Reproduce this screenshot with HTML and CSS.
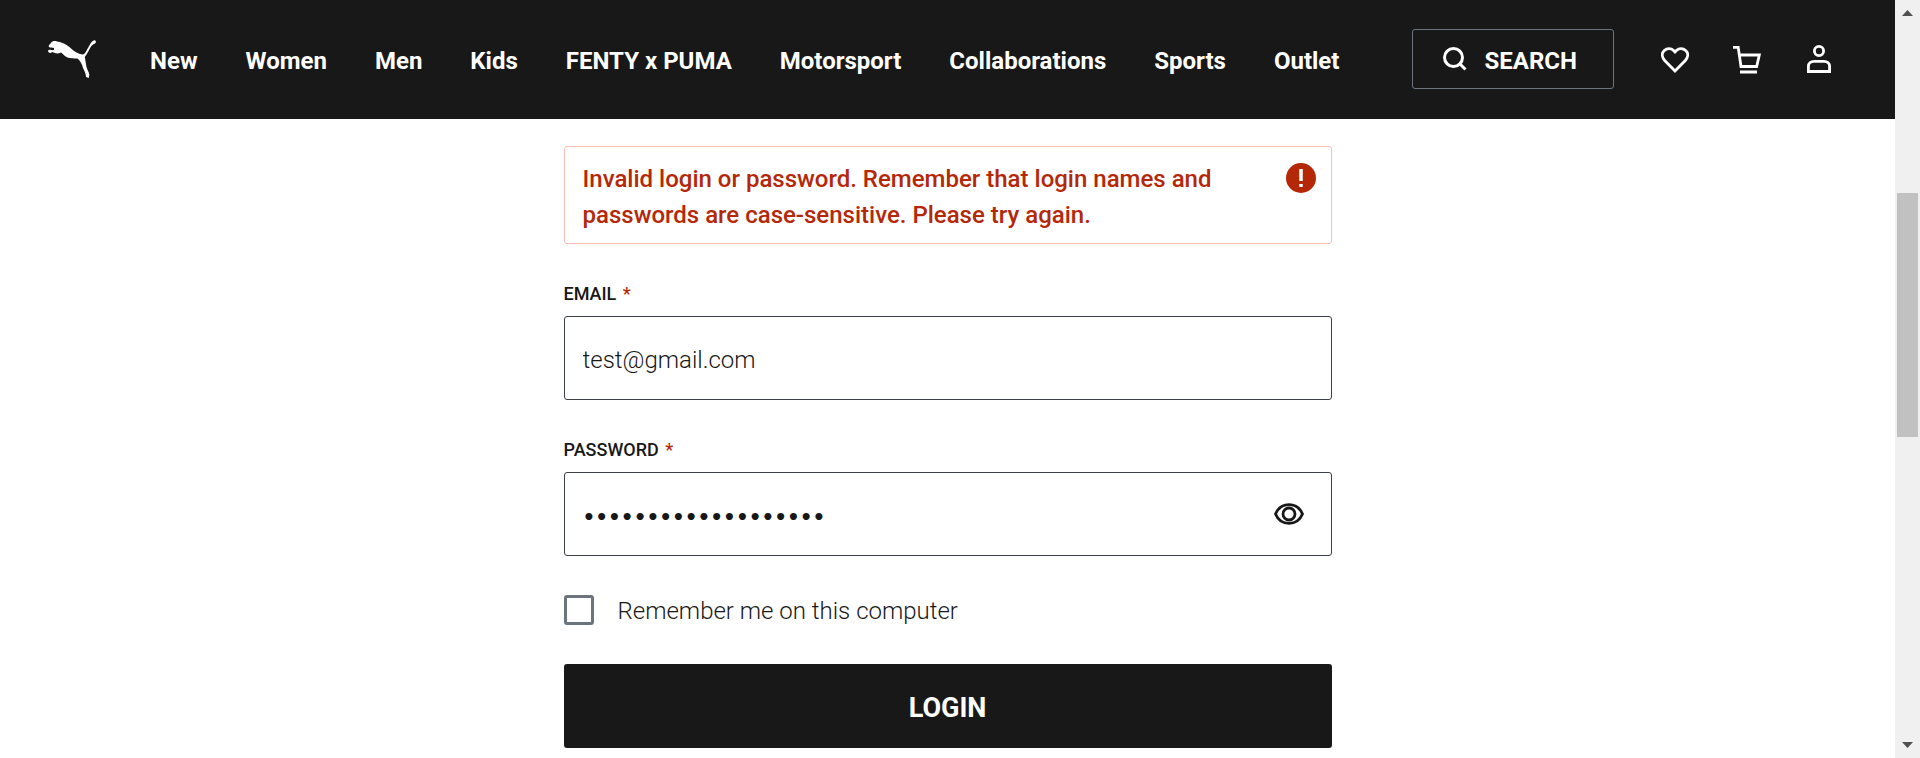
FILE: index.html
```html
<!DOCTYPE html>
<html lang="en">
<head>
<meta charset="utf-8">
<title>Login | PUMA</title>
<link rel="stylesheet" href="styles.css">
</head>
<body>
<div class="page">
  <header class="header">
    <a class="logo" href="#" aria-label="PUMA home">
      <svg width="48" height="38" viewBox="0 0 48 38" fill="currentColor"><path d="M1 7 C0 5 2 4.500 3 3 C4 1 7 .5 9 1.500 C14 2 18 4.500 22 7.500 C26 11.500 30 14 34.500 14.500 C37.500 14 38 11 40 8 C42 4.500 43 1.500 46 .2 C48 -.3 48.600 2.500 47 3.500 C44 4.500 42.800 6.500 41.300 9.500 C39.800 12.500 38 15 36.800 17 C37.500 21 38 24 38.500 27 C39 30 41.300 32 41.300 35 L40.800 38 L38 37 C38 34 36.500 31 35 28 C34 24 32 20.500 29.500 18.500 C26 18.500 22 18.200 19.500 17.500 C17 16.500 15 14 13 12.500 C10 14 7 13.500 4.500 12 L2.500 13 C0 12.500 -.3 11.500 .5 10 C2.500 9.500 4.500 10.500 6 10 L6 8 C4.500 7.500 2.500 8 1 7Z"/></svg>
    </a>
    <nav class="nav">
      <a href="#">New</a>
      <a href="#">Women</a>
      <a href="#">Men</a>
      <a href="#">Kids</a>
      <a href="#">FENTY x PUMA</a>
      <a href="#">Motorsport</a>
      <a href="#">Collaborations</a>
      <a href="#">Sports</a>
      <a href="#">Outlet</a>
    </nav>
    <div class="tools">
      <button class="search" type="button">
        <svg width="24" height="24" viewBox="0 0 24 24" fill="none" stroke="currentColor" stroke-width="3"><circle cx="10.500" cy="10.500" r="9"/><path d="M16.500 16.500L22.500 22.500"/></svg>
        <span>SEARCH</span>
      </button>
      <a class="tool" href="#" aria-label="Wishlist">
        <svg width="28" height="30" viewBox="0 0 28 30" fill="none" stroke="currentColor" stroke-width="2.800"><path d="M14 27 L3.700 16.500 C.6 13 .6 9 3.300 6.500 C6 4 10 4 12.300 6.300 L14 8 L15.700 6.300 C18 4 22 4 24.700 6.500 C27.400 9 27.400 13 24.300 16.500Z"/></svg>
      </a>
      <a class="tool" href="#" aria-label="Cart">
        <svg width="28" height="30" viewBox="0 0 28 30" fill="none" stroke="currentColor" stroke-width="2.800"><path d="M0 3.400H5.200L8 22.500H23.700L26.300 11H6.500M7 28H24"/></svg>
      </a>
      <a class="tool" href="#" aria-label="My account">
        <svg width="28" height="30" viewBox="0 0 28 30" fill="none" stroke="currentColor" stroke-width="2.800"><circle cx="14" cy="7" r="4.600"/><path d="M3.400 27.500V22.500C3.400 19 6 17.400 9 17.400H19C22 17.400 24.600 19 24.600 22.500V27.500Z"/></svg>
      </a>
    </div>
  </header>
  <main class="main">
    <form class="form">
      <div class="alert" role="alert">
        <p class="alert-text">Invalid login or password. Remember that login names and passwords are case-sensitive. Please try again.</p>
        <svg class="alert-icon" width="30" height="30" viewBox="0 0 30 30"><circle cx="15" cy="15" r="15" fill="#b52807"/><path d="M15 6V18M15 21V24" stroke="#fff" stroke-width="3.500"/></svg>
      </div>
      <div class="field">
        <label class="label" for="email">EMAIL <span class="required">*</span></label>
        <div class="box"><input class="input" id="email" type="email" value="test@gmail.com"></div>
      </div>
      <div class="field">
        <label class="label" for="password">PASSWORD <span class="required">*</span></label>
        <div class="box">
          <input class="input input-password" id="password" type="password" value="correcthorsebattery">
          <button class="reveal" type="button" aria-label="Show password">
            <svg width="30" height="22" viewBox="0 0 30 22" fill="none" stroke="currentColor" stroke-width="2.800"><path d="M1.500 11C4 5 9 1.700 15 1.700S26 5 28.500 11C26 17 21 20.300 15 20.300S4 17 1.500 11Z"/><circle cx="15" cy="11" r="6"/></svg>
          </button>
        </div>
      </div>
      <div class="remember">
        <input class="check" id="remember" type="checkbox">
        <label class="remember-label" for="remember">Remember me on this computer</label>
      </div>
      <button class="login" type="submit">LOGIN</button>
    </form>
  </main>
</div>
<div class="scrollbar" aria-hidden="true">
  <svg width="11" height="6" viewBox="0 0 11 6"><path d="M0 6L5.500 0L11 6Z" fill="#505050"/></svg>
  <div class="track"><div class="thumb"></div></div>
  <svg width="11" height="6" viewBox="0 0 11 6"><path d="M0 0L5.500 6L11 0Z" fill="#505050"/></svg>
</div>
</body>
</html>
```
FILE: styles.css
```css
* { box-sizing: border-box; }

body {
  display: flex;
  height: 100vh;
  margin: 0;
  overflow: hidden;
  background: #fff;
  color: #181818;
  font-family: Roboto, "Liberation Sans", sans-serif;
}

.page {
  flex: 1;
  min-width: 0;
  overflow: hidden;
}

.header {
  display: flex;
  align-items: center;
  padding: 29px 62px 30px 48px;
  background: #181818;
  color: #fff;
}

.header a { color: inherit; text-decoration: none; }

.logo, .tool { display: flex; }

.nav {
  display: flex;
  gap: 48px;
  margin-left: 54px;
  padding-top: 3px;
  font-size: 24px;
  font-weight: 700;
  line-height: 32px;
  white-space: nowrap;
}

.tools {
  display: flex;
  align-items: center;
  gap: 44px;
  margin-left: auto;
}

.search {
  display: flex;
  align-items: center;
  gap: 18px;
  height: 60px;
  margin-right: 3px;
  padding: 0 36px 0 30px;
  border: 1px solid #6c757d;
  border-radius: 3px;
  background: transparent;
  color: inherit;
  font: 700 24px/32px Roboto, "Liberation Sans", sans-serif;
}

.search span { padding-top: 3px; }

.main {
  display: flex;
  justify-content: center;
  padding: 27px 24px 10px;
}

.form { width: 100%; max-width: 768px; }

.alert {
  display: flex;
  align-items: flex-start;
  justify-content: space-between;
  gap: 48px;
  padding: 12px 15px 10px 18px;
  border: 1px solid #fcbdb7;
  border-radius: 3px;
}

.alert-text {
  max-width: 660px;
  margin: 2px 0 0;
  color: #b52807;
  font-size: 24px;
  font-weight: 500;
  line-height: 36px;
}

.alert-icon { flex: none; margin-top: 4px; }

.field { margin-top: 36px; }

.label {
  display: block;
  margin-bottom: 9px;
  font-size: 18px;
  font-weight: 500;
  line-height: 27px;
}

.required { margin-left: 2px; color: #b52807; }

.box {
  display: flex;
  align-items: center;
  height: 84px;
  padding: 0 27px 0 18px;
  border: 1px solid #3b4047;
  border-radius: 3px;
}

.input {
  flex: 1;
  min-width: 0;
  padding: 3px 0 0;
  border: 0;
  outline: 0;
  background: transparent;
  color: inherit;
  font: 300 24px/36px Roboto, "Liberation Sans", sans-serif;
}

.input-password { padding-top: 6px; font: 700 20px/36px "DejaVu Sans", sans-serif; }

.reveal {
  display: flex;
  padding: 0;
  border: 0;
  background: transparent;
  color: inherit;
}

.remember {
  display: flex;
  align-items: center;
  gap: 24px;
  margin-top: 36px;
  font-size: 24px;
  font-weight: 300;
  line-height: 33px;
}

.remember-label { padding-top: 3px; }

.check {
  appearance: none;
  width: 30px;
  height: 30px;
  margin: 0;
  border: 3px solid #6c757d;
  border-radius: 3px;
}

.login {
  display: block;
  width: 100%;
  height: 84px;
  margin-top: 36px;
  padding: 3px 0 0;
  border: 0;
  border-radius: 3px;
  background: #181818;
  color: #fff;
  font: 700 27px/36px Roboto, "Liberation Sans", sans-serif;
}

.scrollbar {
  display: flex;
  flex: none;
  flex-direction: column;
  align-items: center;
  gap: 9px;
  width: 25px;
  padding: 10px 2px;
  background: #f0f0f0;
}

.track { flex: 1; width: 21px; padding-top: 168px; }

.thumb { height: 244px; background: #c1c1c1; }
```
